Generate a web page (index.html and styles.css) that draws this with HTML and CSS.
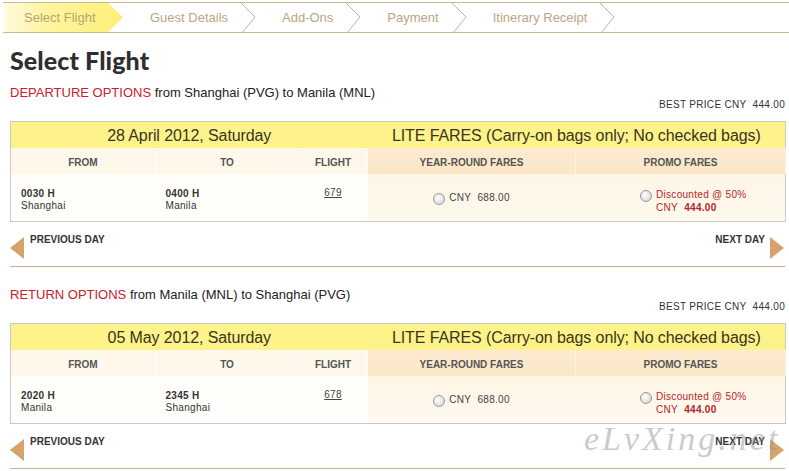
FILE: index.html
```html
<!DOCTYPE html>
<html>
<head>
<meta charset="utf-8">
<link rel="stylesheet" href="styles.css">
</head>
<body>
<div class="nav">
  <div class="tab active"><span>Select Flight</span></div>
  <div class="tab"><span>Guest Details</span><svg class="chev" width="15" height="31" viewBox="0 0 15 31"><polyline points="0,0 15,15 2,31" fill="none" stroke="#bdb5a5" stroke-width="1"/></svg></div>
  <div class="tab"><span>Add-Ons</span><svg class="chev" width="15" height="31" viewBox="0 0 15 31"><polyline points="0,0 15,15 2,31" fill="none" stroke="#bdb5a5" stroke-width="1"/></svg></div>
  <div class="tab"><span>Payment</span><svg class="chev" width="15" height="31" viewBox="0 0 15 31"><polyline points="0,0 15,15 2,31" fill="none" stroke="#bdb5a5" stroke-width="1"/></svg></div>
  <div class="tab"><span>Itinerary Receipt</span><svg class="chev" width="15" height="31" viewBox="0 0 15 31"><polyline points="0,0 15,15 2,31" fill="none" stroke="#bdb5a5" stroke-width="1"/></svg></div>
</div>

<div class="main">
  <h1 class="title">Select Flight</h1>

  <section class="leg">
    <div class="leg-title"><span class="red">DEPARTURE OPTIONS</span> from Shanghai (PVG) to Manila (MNL)</div>
    <div class="best">BEST PRICE CNY&nbsp; 444.00</div>
    <table class="fares">
      <colgroup><col class="c1"><col class="c2"><col class="c3"><col class="c4"><col class="c5"></colgroup>
      <tr class="hdr"><td colspan="3">28 April 2012, Saturday</td><td colspan="2">LITE FARES (Carry-on bags only; No checked bags)</td></tr>
      <tr class="sub"><th>FROM</th><th>TO</th><th>FLIGHT</th><th class="fare">YEAR-ROUND FARES</th><th class="fare">PROMO FARES</th></tr>
      <tr class="data">
        <td class="pt"><b>0030 H</b><br>Shanghai</td>
        <td class="pt"><b>0400 H</b><br>Manila</td>
        <td class="flt"><a>679</a></td>
        <td class="fare"><div class="opt"><span class="radio"></span><span>CNY&nbsp; 688.00</span></div></td>
        <td class="fare"><div class="opt promo"><span class="radio"></span><span>Discounted @ 50%<br>CNY&nbsp; <b>444.00</b></span></div></td>
      </tr>
    </table>
    <div class="days">
      <div class="day prev"><span class="tri-l"></span><span>PREVIOUS DAY</span></div>
      <div class="day next"><span>NEXT DAY</span><span class="tri-r"></span></div>
    </div>
  </section>

  <section class="leg">
    <div class="leg-title"><span class="red">RETURN OPTIONS</span> from Manila (MNL) to Shanghai (PVG)</div>
    <div class="best">BEST PRICE CNY&nbsp; 444.00</div>
    <table class="fares">
      <colgroup><col class="c1"><col class="c2"><col class="c3"><col class="c4"><col class="c5"></colgroup>
      <tr class="hdr"><td colspan="3">05 May 2012, Saturday</td><td colspan="2">LITE FARES (Carry-on bags only; No checked bags)</td></tr>
      <tr class="sub"><th>FROM</th><th>TO</th><th>FLIGHT</th><th class="fare">YEAR-ROUND FARES</th><th class="fare">PROMO FARES</th></tr>
      <tr class="data">
        <td class="pt"><b>2020 H</b><br>Manila</td>
        <td class="pt"><b>2345 H</b><br>Shanghai</td>
        <td class="flt"><a>678</a></td>
        <td class="fare"><div class="opt"><span class="radio"></span><span>CNY&nbsp; 688.00</span></div></td>
        <td class="fare"><div class="opt promo"><span class="radio"></span><span>Discounted @ 50%<br>CNY&nbsp; <b>444.00</b></span></div></td>
      </tr>
    </table>
    <div class="days">
      <div class="day prev"><span class="tri-l"></span><span>PREVIOUS DAY</span></div>
      <div class="day next"><span>NEXT DAY</span><span class="tri-r"></span></div>
    </div>
  </section>
</div>
<div class="watermark">eLvXing.net</div>
</body>
</html>
```

FILE: styles.css
```css
html, body { margin: 0; padding: 0; background: #fff; }
body { font-family: "Liberation Sans", Arial, sans-serif; color: #333; position: relative; width: 789px; height: 471px; overflow: hidden; }

.nav {
  margin: 2px 0 0 3px;
  height: 29px;
  border-top: 1px solid #cdb896;
  border-bottom: 1px solid #cdb896;
  display: flex;
  align-items: stretch;
}
.tab {
  display: flex;
  align-items: center;
  font-size: 13px;
  color: #bba683;
  padding-left: 27px;
}
.tab span { margin-right: 12px; }
.tab .chev { display: block; margin-top: -1px; }
.tab.active {
  margin-left: 1px;
  width: 119px;
  padding-left: 20px;
  box-sizing: border-box;
  background: linear-gradient(to right, #fffbe0 0%, #fdf5a0 35%, #fcef78 100%);
  clip-path: polygon(0 0, 104px 0, 119px 50%, 104px 100%, 0 100%);
  color: #b8a56e;
}

.main { padding: 0 4px 0 10px; }
.title {
  font-family: Lato, "Open Sans", sans-serif;
  font-weight: 900;
  font-size: 25px;
  line-height: 28px;
  letter-spacing: 0.1px;
  color: #2f2f2f;
  margin: 13px 0 0 0;
}

.leg-title { font-size: 13px; line-height: 16px; margin-top: 11px; color: #222; }
.leg + .leg .leg-title { margin-top: 20px; }
.red { color: #c8202c; }
.best { text-align: right; font-size: 10px; line-height: 12px; margin-top: -2px; color: #333; letter-spacing: 0.3px; }

.fares {
  width: 100%;
  border-collapse: collapse;
  border: 1px solid #c9c9c9;
  margin-top: 10px;
  table-layout: fixed;
}
.c1 { width: 145px; } .c2 { width: 143px; } .c3 { width: 69px; } .c4 { width: 208px; } .c5 { width: 210px; }
.fares td, .fares th { padding: 0; box-sizing: border-box; }
.hdr { height: 26px; }
.hdr td {
  background: #fdf38a;
  text-align: center;
  font-size: 16px;
  letter-spacing: -0.1px;
  color: #3a3520;
  line-height: 18px;
  padding-top: 2px;
}
.sub { height: 26px; }
.sub th {
  font-size: 10px;
  font-weight: bold;
  color: #555;
  background: #fdf8ea;
  border-right: 1px solid #fffdf6;
  padding-top: 3px;
}
.sub th.fare { background: linear-gradient(to bottom, #fdebd0, #fbe6c6); border-right: 1px solid #fdf1df; }
.data { height: 48px; }
.data td { vertical-align: top; font-size: 10px; background: #fffefb; }
.data td.pt { padding: 14px 0 0 10px; line-height: 12px; color: #333; letter-spacing: 0.3px; }
.data td.pt b { color: #333; }
.data td.flt { text-align: center; padding-top: 13px; }
.flt a { text-decoration: underline; color: #444; letter-spacing: 0.3px; }
.data td.fare { background: linear-gradient(to bottom, #fef5e4, #fef9ef); vertical-align: middle; padding-top: 2px; }
.opt { display: flex; justify-content: center; align-items: flex-start; gap: 4px; line-height: 13px; letter-spacing: 0.3px; color: #444; }
.opt.promo { color: #b5262c; margin-top: 5px; padding-left: 26px; }
.opt.promo b { color: #b5262c; }
.radio {
  width: 10px; height: 10px; border-radius: 50%;
  border: 1px solid #9a9a9a;
  background: radial-gradient(circle at 40% 40%, #fff 0%, #ddd 70%, #bbb 100%);
  margin-top: 2px;
  flex: none;
}

.days { display: flex; justify-content: space-between; height: 44px; border-bottom: 1px solid #c8b08e; }
.day { display: flex; font-size: 10px; font-weight: bold; color: #333; padding-top: 12px; }
.day span { line-height: 12px; }
.tri-l { width: 0; height: 0; border-top: 11px solid transparent; border-bottom: 11px solid transparent; border-right: 14px solid #d6a36b; margin: 3px 6px 0 0; }
.tri-r { width: 0; height: 0; border-top: 11px solid transparent; border-bottom: 11px solid transparent; border-left: 14px solid #d6a36b; margin: 3px 1px 0 5px; }

.watermark {
  position: absolute;
  left: 584px; top: 420px;
  font-family: "Liberation Serif", serif;
  font-style: italic;
  font-size: 34px;
  color: rgba(150,150,150,0.5);
  letter-spacing: 3px;
  pointer-events: none;
}
```
